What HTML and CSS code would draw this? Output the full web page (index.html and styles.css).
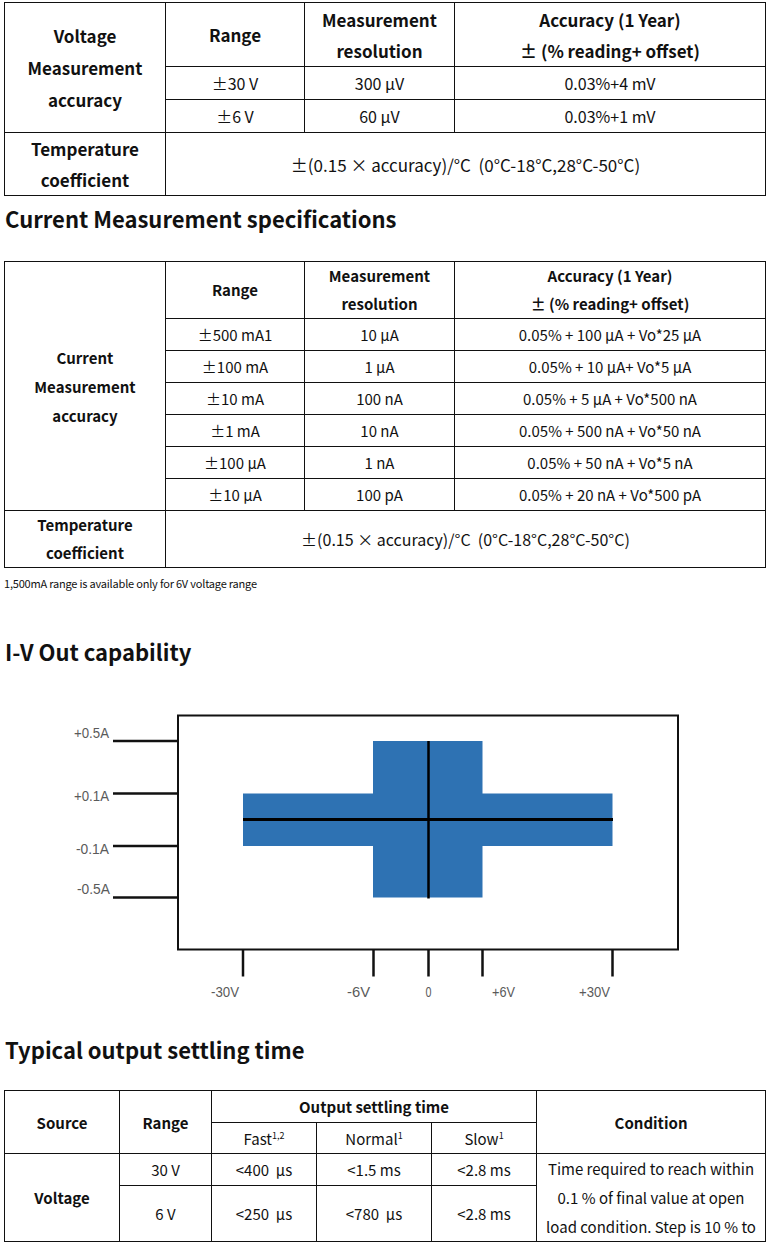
FILE: index.html
```html
<!DOCTYPE html>
<html lang="en">
<head>
<meta charset="utf-8">
<title>Specifications</title>
<link rel="stylesheet" href="styles.css">
</head>
<body>
<div class="page">

<table class="spec spec-v">
  <colgroup><col class="c1"><col class="c2"><col class="c3"><col class="c4"></colgroup>
  <tr class="r-head">
    <th rowspan="3" class="tall">Voltage<br>Measurement<br>accuracy</th>
    <th>Range</th>
    <th>Measurement<br>resolution</th>
    <th>Accuracy (1 Year)<br>± (% reading+ offset)</th>
  </tr>
  <tr class="r-data"><td>±30 V</td><td>300 μV</td><td>0.03%+4 mV</td></tr>
  <tr class="r-data"><td>±6 V</td><td>60 μV</td><td>0.03%+1 mV</td></tr>
  <tr class="r-temp">
    <th>Temperature<br>coefficient</th>
    <td colspan="3" class="pre temp">±(0.15 × accuracy)/°C  (0°C-18°C,28°C-50°C)</td>
  </tr>
</table>

<h2 class="h-current">Current Measurement specifications</h2>

<table class="spec spec-c">
  <colgroup><col class="c1"><col class="c2"><col class="c3"><col class="c4"></colgroup>
  <tr class="r-head">
    <th rowspan="7" class="tall">Current<br>Measurement<br>accuracy</th>
    <th>Range</th>
    <th>Measurement<br>resolution</th>
    <th>Accuracy (1 Year)<br>± (% reading+ offset)</th>
  </tr>
  <tr class="r-data"><td>±500 mA1</td><td>10 μA</td><td>0.05% + 100 μA + Vo*25 μA</td></tr>
  <tr class="r-data"><td>±100 mA</td><td>1 μA</td><td>0.05% + 10 μA+ Vo*5 μA</td></tr>
  <tr class="r-data"><td>±10 mA</td><td>100 nA</td><td>0.05% + 5 μA + Vo*500 nA</td></tr>
  <tr class="r-data"><td>±1 mA</td><td>10 nA</td><td>0.05% + 500 nA + Vo*50 nA</td></tr>
  <tr class="r-data"><td>±100 μA</td><td>1 nA</td><td>0.05% + 50 nA + Vo*5 nA</td></tr>
  <tr class="r-data"><td>±10 μA</td><td>100 pA</td><td>0.05% + 20 nA + Vo*500 pA</td></tr>
  <tr class="r-temp">
    <th>Temperature<br>coefficient</th>
    <td colspan="3" class="pre temp">±(0.15 × accuracy)/°C  (0°C-18°C,28°C-50°C)</td>
  </tr>
</table>

<p class="note">1,500mA range is available only for 6V voltage range</p>

<h2 class="h-iv">I-V Out capability</h2>

<svg class="chart" width="769" height="310" viewBox="0 0 769 310" xmlns="http://www.w3.org/2000/svg">
  <rect x="178" y="16.5" width="500" height="234" fill="none" stroke="#111" stroke-width="2"/>
  <rect x="243" y="94.5" width="369.5" height="52.5" fill="#2e72b3"/>
  <rect x="373" y="42" width="109.5" height="156.5" fill="#2e72b3"/>
  <line x1="243" y1="120.5" x2="613" y2="120.5" stroke="#000" stroke-width="3"/>
  <line x1="428.5" y1="42" x2="428.5" y2="199.5" stroke="#000" stroke-width="2.5"/>
  <g stroke="#111" stroke-width="2.5">
    <line x1="113" y1="42" x2="178" y2="42"/>
    <line x1="113" y1="94.5" x2="178" y2="94.5"/>
    <line x1="113" y1="147" x2="178" y2="147"/>
    <line x1="113" y1="198.5" x2="178" y2="198.5"/>
    <line x1="243" y1="251" x2="243" y2="277.5"/>
    <line x1="373.5" y1="251" x2="373.5" y2="277.5"/>
    <line x1="428.5" y1="251" x2="428.5" y2="277.5"/>
    <line x1="482.5" y1="251" x2="482.5" y2="277.5"/>
    <line x1="612.5" y1="251" x2="612.5" y2="277.5"/>
  </g>
  <g class="axis-label">
    <text x="74" y="39" textLength="35" lengthAdjust="spacingAndGlyphs">+0.5A</text>
    <text x="74" y="102" textLength="35" lengthAdjust="spacingAndGlyphs">+0.1A</text>
    <text x="76" y="155" textLength="33" lengthAdjust="spacingAndGlyphs">-0.1A</text>
    <text x="77" y="195" textLength="33" lengthAdjust="spacingAndGlyphs">-0.5A</text>
    <text x="211" y="298" textLength="28" lengthAdjust="spacingAndGlyphs">-30V</text>
    <text x="347" y="298" textLength="23" lengthAdjust="spacingAndGlyphs">-6V</text>
    <text x="425.5" y="298" textLength="6" lengthAdjust="spacingAndGlyphs">0</text>
    <text x="492" y="298" textLength="23" lengthAdjust="spacingAndGlyphs">+6V</text>
    <text x="579" y="298" textLength="31" lengthAdjust="spacingAndGlyphs">+30V</text>
  </g>
</svg>

<h2 class="h-settle">Typical output settling time</h2>

<table class="spec spec-s">
  <colgroup><col class="s1"><col class="s2"><col class="s3"><col class="s4"><col class="s5"><col class="s6"></colgroup>
  <tr class="s-r1">
    <th rowspan="2">Source</th>
    <th rowspan="2">Range</th>
    <th colspan="3">Output settling time</th>
    <th rowspan="2">Condition</th>
  </tr>
  <tr class="s-r2">
    <td>Fast<sup>1,2</sup></td>
    <td>Normal<sup>1</sup></td>
    <td>Slow<sup>1</sup></td>
  </tr>
  <tr class="s-r3">
    <th rowspan="2">Voltage</th>
    <td>30 V</td>
    <td class="pre">&lt;400  μs</td>
    <td>&lt;1.5 ms</td>
    <td>&lt;2.8 ms</td>
    <td rowspan="2" class="cond">Time required to reach within<br>0.1 % of final value at open<br>load condition. Step is 10 % to</td>
  </tr>
  <tr class="s-r4">
    <td>6 V</td>
    <td class="pre">&lt;250  μs</td>
    <td class="pre">&lt;780  μs</td>
    <td>&lt;2.8 ms</td>
  </tr>
</table>

</div>
</body>
</html>
```

FILE: styles.css
```css
html, body {
  margin: 0;
  padding: 0;
  background: #ffffff;
}

body {
  font-family: "Noto Sans CJK SC", "Noto Sans", sans-serif;
  color: #111111;
}

.page {
  padding: 0 4px;
}

.spec {
  border-collapse: collapse;
  table-layout: fixed;
  width: 761px;
}

.spec th,
.spec td {
  border: 1px solid #111111;
  padding: 0;
  text-align: center;
  vertical-align: middle;
}

.spec th {
  font-weight: 700;
}

.spec td {
  font-weight: 400;
}

.pre {
  white-space: pre;
}

/* column widths for the two measurement tables */
.c1 { width: 161px; }
.c2 { width: 139px; }
.c3 { width: 150px; }
.c4 { width: 311px; }

/* voltage table */
.spec-v {
  margin-top: 2px;
}

.spec-v th {
  font-size: 17px;
  line-height: 31px;
}

.spec-v td {
  font-size: 16px;
  line-height: 31px;
}

.spec-v td.temp {
  font-size: 17px;
}

.spec-v .tall {
  line-height: 32px;
}

.spec-v .r-head { height: 64px; }
.spec-v .r-data { height: 33px; }
.spec-v .r-temp { height: 63px; }

/* headings */
h2 {
  margin: 0;
  font-size: 22px;
  font-weight: 700;
  line-height: 30px;
  padding-left: 1px;
}

.h-current {
  margin-top: 7px;
  margin-bottom: 28px;
}

/* current table */
.spec-c th,
.spec-c td {
  font-size: 15px;
  line-height: 28px;
}

.spec-c td.temp {
  font-size: 16px;
}

.spec-c .tall {
  line-height: 29px;
}

.spec-c .r-head { height: 57px; }
.spec-c .r-data { height: 32px; }
.spec-c .r-temp { height: 57px; }

.note {
  margin: 8px 0 0 0;
  font-size: 11px;
  line-height: 14px;
  letter-spacing: -0.2px;
}

.h-iv {
  margin-top: 46px;
}

.chart {
  display: block;
  margin: 33px 0 0 -4px;
}

.axis-label {
  font-family: "Liberation Sans", "DejaVu Sans", sans-serif;
  font-size: 15px;
  fill: #5a5a5a;
}

.h-settle {
  margin-top: 25px;
  margin-bottom: 26px;
}

/* settling table */
.s1 { width: 115px; }
.s2 { width: 92px; }
.s3 { width: 105px; }
.s4 { width: 115px; }
.s5 { width: 105px; }
.s6 { width: 229px; }

.spec-s th,
.spec-s td {
  font-size: 15px;
  line-height: 29px;
}

.spec-s .s-r1 { height: 32px; }
.spec-s .s-r2 { height: 31px; }
.spec-s .s-r3 { height: 32px; }
.spec-s .s-r4 { height: 55px; }

.spec-s sup {
  font-size: 9px;
  line-height: 0;
  vertical-align: 6px;
}

.spec-s .cond {
  line-height: 29px;
}
```
